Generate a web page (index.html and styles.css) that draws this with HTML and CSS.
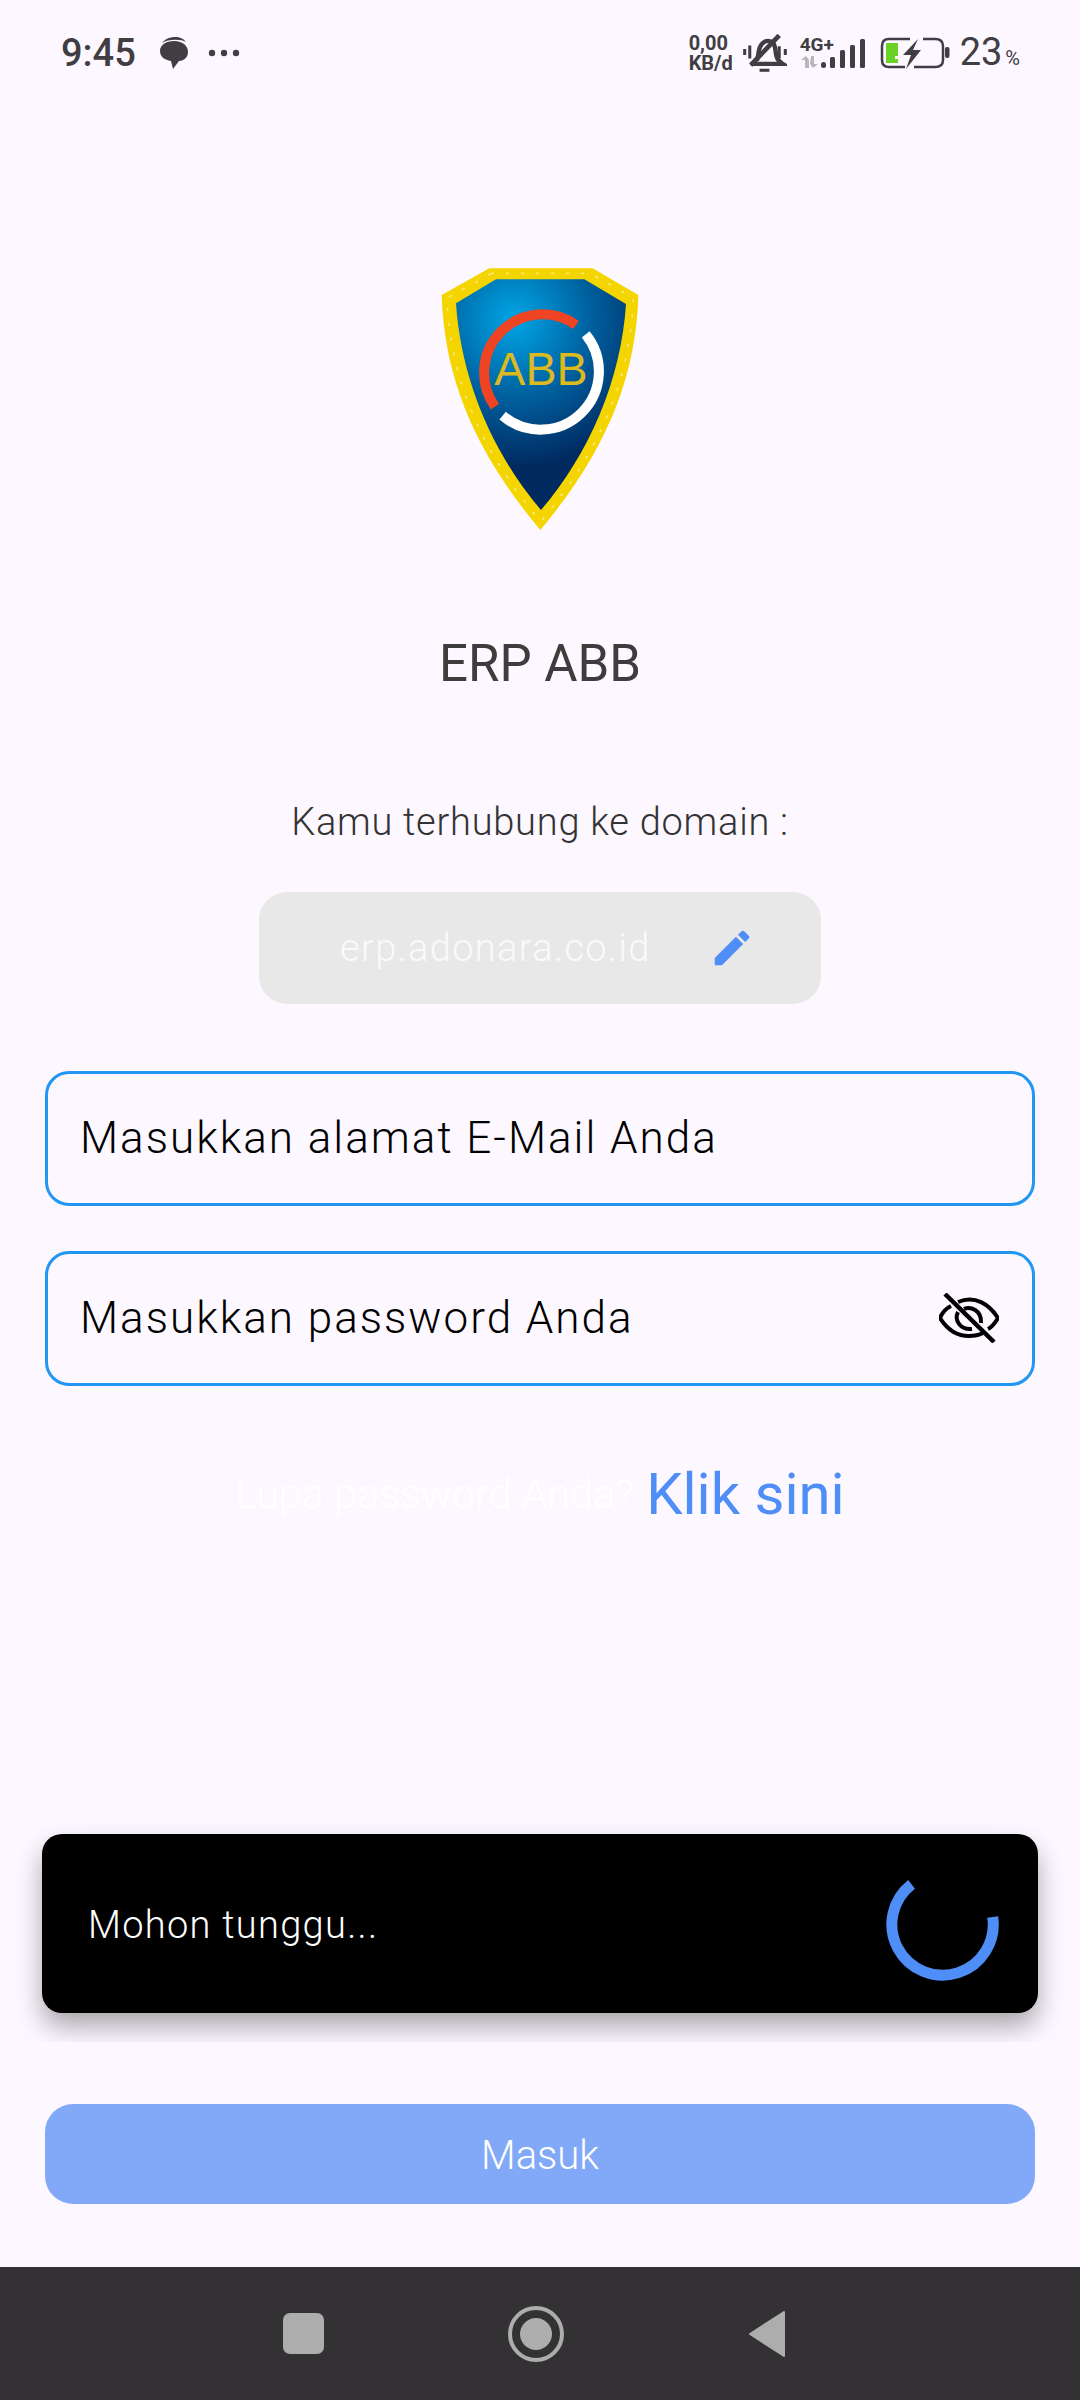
FILE: index.html
```html
<!DOCTYPE html>
<html lang="en">
<head>
    <meta charset="UTF-8">
    <meta name="viewport" content="width=device-width, initial-scale=1.0">
    <title>ERP ABB</title>
    <link rel="stylesheet" href="styles.css">
</head>

<body>
    <div class="page">
        <!-- status bar -->
        <div class="status">
            <div class="status-left">
                <span class="time">9:45</span>
                <svg class="bubble" width="30" height="32" viewBox="0 0 30 32">
                    <path d="M3 6 C6 2 11 0 16 0 C21 0 25 2 27 5 C22 2 9 2 3 6 Z" fill="#403d43"/>
                    <path d="M1 14 C1 8 7 4 15 4 C24 4 29 9 29 15 C29 21 24 24 20 24 L14 32 L12 24 C6 23 1 20 1 14 Z" fill="#403d43"/>
                </svg>
                <svg class="dots" width="32" height="8" viewBox="0 0 32 8">
                    <circle cx="4" cy="4" r="3.2" fill="#403d43"/>
                    <circle cx="16" cy="4" r="3.2" fill="#403d43"/>
                    <circle cx="28" cy="4" r="3.2" fill="#403d43"/>
                </svg>
            </div>
            <div class="status-right">
                <div class="speed"><span>0,00</span><span>KB/d</span></div>
                <svg class="bell" width="44" height="38" viewBox="255 40 130 112" fill="none" stroke="#403d43">
                    <path d="M296 118 C303 100 298 82 312 68 C322 58 336 58 344 66 C352 76 350 92 354 106 C357 116 362 122 372 128 H278" stroke-width="13"/>
                    <path d="M362 44 L278 132" stroke-width="14"/>
                    <path d="M304 147 H333" stroke-width="9"/>
                    <path d="M260 84 V102 M275 74 V112 M362 76 V112 M380 84 V102" stroke-width="9"/>
                </svg>
                <div class="network">
                    <span class="net-label">4G+</span>
                    <svg width="65" height="30" viewBox="0 0 65 30">
                        <path d="M5 30 V22 H1 L6 18 L9 22 V30 Z" fill="#b9b6bb"/>
                        <path d="M11 18 H14 V26 H18 L13 30 L10 26 Z" fill="#b9b6bb"/>
                        <rect x="21" y="24" width="5" height="6" rx="2.5" fill="#403d43"/>
                        <rect x="30" y="19" width="5" height="11" rx="1.5" fill="#403d43"/>
                        <rect x="40" y="12" width="5" height="18" rx="1.5" fill="#403d43"/>
                        <rect x="50" y="7" width="5" height="23" rx="1.5" fill="#403d43"/>
                        <rect x="60" y="1" width="5" height="29" rx="1.5" fill="#403d43"/>
                    </svg>
                </div>
                <svg class="battery" width="70" height="32" viewBox="0 0 70 32" fill="none">
                    <path d="M30 2 H9 Q2 2 2 9 V23 Q2 30 9 30 H25" stroke="#403d43" stroke-width="2.5"/>
                    <path d="M43 2 H55 Q63 2 63 9 V23 Q63 30 55 30 H34" stroke="#403d43" stroke-width="2.5"/>
                    <path d="M6 6 H18 V19 H15 V22 H18 V26 H6 Z" fill="#6ad125"/>
                    <path d="M38 2 L23 18 H31 L26 32 L41 13 H33 Z" fill="#403d43"/>
                    <rect x="65" y="10" width="4.5" height="11" rx="2" fill="#403d43"/>
                </svg>
                <div class="level"><span>23</span><span class="percent">%</span></div>
            </div>
        </div>

        <div class="content">
            <svg class="logo" width="198" height="264" viewBox="120 84 594 792">
                <defs>
                    <radialGradient id="shield" gradientUnits="userSpaceOnUse" cx="340" cy="240" r="520">
                        <stop offset="0" stop-color="#00a6e6"/>
                        <stop offset="0.45" stop-color="#005f9e"/>
                        <stop offset="0.85" stop-color="#002a60"/>
                    </radialGradient>
                </defs>
                <path d="M265 85 H575 L712 165 C705 420 610 640 418 870 C225 640 130 420 122 165 Z" fill="#f4d500"/>
                <path class="logo-stitch" d="M272 100 H568 L697 174 C688 420 595 635 419 845 C243 635 147 420 138 174 Z"/>
                <path d="M285 118 H550 L675 192 C660 420 565 640 420 810 C275 640 180 420 165 190 Z" fill="url(#shield)"/>
                <path d="M282 500 A175 175 0 0 1 525 255" fill="none" stroke="#ef4423" stroke-width="30"/>
                <path d="M554 283 A175 175 0 0 1 305 527" fill="none" stroke="#ffffff" stroke-width="30"/>
                <text class="logo-text" x="420" y="436" text-anchor="middle">ABB</text>
            </svg>

            <h1 class="title">ERP ABB</h1>
            <p class="domain-label">Kamu terhubung ke domain :</p>

            <div class="domain">
                <span class="domain-name">erp.adonara.co.id</span>
                <svg class="edit" width="46" height="46" viewBox="0 0 24 24">
                    <path d="M3 17.25V21h3.75L17.81 9.94l-3.75-3.75L3 17.25zM20.71 7.04c.39-.39.39-1.02 0-1.41l-2.34-2.34c-.39-.39-1.02-.39-1.41 0l-1.83 1.83 3.75 3.75 1.83-1.83z" fill="#4f8ef7"/>
                </svg>
            </div>

            <div class="field field-email"><span>Masukkan alamat E-Mail Anda</span></div>
            <div class="field field-password">
                <span>Masukkan password Anda</span>
                <svg class="eye" width="60" height="50" viewBox="0 0 60 50" fill="none" stroke="#000" stroke-width="4">
                    <path d="M12 13 C6 16 3 20 1 25 C8 36 18 43 30 43 C36 43 40 42 44 40"/>
                    <path d="M19 9 C36 2 50 11 59 25 C56 30 53 34 49 36"/>
                    <path d="M25 16 C31 13 43 17 42 30"/>
                    <path d="M19 19 C15 27 21 37 33 36"/>
                    <path d="M6 1 L55 49" stroke-width="4.5"/>
                </svg>
            </div>

            <div class="forgot">
                <span class="forgot-text">Lupa password Anda?</span>
                <span class="forgot-link">Klik sini</span>
            </div>

            <button class="submit">Masuk</button>
        </div>

        <!-- snackbar on top of the form -->
        <div class="snackbar">
            <span class="snackbar-text">Mohon tunggu...</span>
            <svg class="spinner" width="114" height="114" viewBox="0 0 114 114">
                <path d="M107.7 50 A50.7 50.7 0 1 1 26.6 17.3" fill="none" stroke="#4f8ef7" stroke-width="11"/>
            </svg>
        </div>

        <div class="navbar">
            <div class="nav-square"></div>
            <div class="nav-home"><div class="nav-dot"></div></div>
            <svg width="38" height="48" viewBox="0 0 38 48">
                <path d="M36 2 V46 L2 24 Z" fill="#adadad" stroke="#adadad" stroke-width="2" stroke-linejoin="round"/>
            </svg>
        </div>
    </div>
</body>
</html>
```

FILE: styles.css
```css
body {
    margin: 0;
    background-color: #fdf7ff;
    font-family: Roboto, "Liberation Sans", sans-serif;
}

.page {
    position: relative;
    display: flex;
    flex-direction: column;
    height: 2400px;
    overflow: hidden;
}

/* status bar */
.status {
    display: flex;
    justify-content: space-between;
    align-items: center;
    height: 106px;
    padding: 0 60px 0 61px;
    color: #403d43;
}

.status-left,
.status-right {
    display: flex;
    align-items: center;
}

.time {
    font-size: 38px;
    font-weight: 500;
    line-height: 44px;
}

.bubble {
    margin-left: 23px;
}

.dots {
    margin-left: 19px;
}

.speed {
    display: flex;
    flex-direction: column;
    align-items: flex-start;
    width: 43px;
    font-size: 20px;
    font-weight: 700;
    line-height: 20px;
}

.bell {
    margin-left: 11px;
}

.network {
    position: relative;
    margin-left: 13px;
    width: 65px;
    height: 30px;
}

.network svg {
    display: block;
}

.net-label {
    position: absolute;
    left: 0;
    top: -4px;
    font-size: 19px;
    font-weight: 700;
    line-height: 22px;
}

.battery {
    margin-left: 15px;
}

.level {
    margin-left: 10px;
    margin-top: 3px;
    font-size: 38px;
    line-height: 44px;
    white-space: nowrap;
}

.percent {
    margin-left: 3px;
    font-size: 20px;
}

/* form */
.content {
    flex: 1;
    display: flex;
    flex-direction: column;
    align-items: center;
    padding: 162px 45px 63px;
}

.logo {
    display: block;
    flex: none;
}

.logo-stitch {
    fill: none;
    stroke: #f8ea80;
    stroke-width: 5;
    stroke-dasharray: 5 40;
    stroke-linecap: round;
}

.logo-text {
    font-family: "Liberation Sans", sans-serif;
    font-size: 140px;
    fill: #dcb91f;
}

.title {
    margin: 102px 0 0;
    font-size: 51px;
    font-weight: 400;
    line-height: 60px;
    color: #3d3d3d;
}

.domain-label {
    margin: 103px 0 0;
    font-size: 38px;
    font-weight: 300;
    letter-spacing: 0.75px;
    line-height: 50px;
    color: #333;
}

.domain {
    display: flex;
    align-items: center;
    box-sizing: border-box;
    width: 562px;
    height: 112px;
    margin-top: 45px;
    padding-left: 81px;
    background-color: #e8e8e8;
    border-radius: 28px;
}

.domain-name {
    font-size: 38px;
    font-weight: 300;
    letter-spacing: 1.35px;
    color: #fafafa;
}

.edit {
    margin-left: 58px;
}

.field {
    display: flex;
    justify-content: space-between;
    align-items: center;
    box-sizing: border-box;
    width: 990px;
    height: 135px;
    padding: 0 33px 2px 32px;
    border: 3px solid #2196f3;
    border-radius: 24px;
    font-size: 44px;
    font-weight: 300;
    letter-spacing: 2px;
    color: #000;
}

.field-email {
    margin-top: 67px;
}

.field-password {
    margin-top: 45px;
}

.forgot {
    display: flex;
    align-items: center;
    gap: 12px;
    margin-top: 70px;
    line-height: 76px;
}

.forgot-text {
    font-size: 41.3px;
    font-weight: 300;
    color: #fff;
}

.forgot-link {
    font-size: 58px;
    color: #4f8ef7;
}

.submit {
    width: 990px;
    height: 100px;
    margin-top: auto;
    padding-top: 4px;
    border: none;
    border-radius: 28px;
    background-color: #82a9f8;
    font-family: inherit;
    font-size: 40px;
    font-weight: 300;
    color: #fff;
}

/* snackbar */
.snackbar {
    position: absolute;
    left: 42px;
    right: 42px;
    top: 1834px;
    display: flex;
    justify-content: space-between;
    align-items: center;
    box-sizing: border-box;
    height: 179px;
    padding: 0 39px 0 46px;
    background-color: #000;
    border-radius: 20px;
    box-shadow: 0 14px 26px rgba(0, 0, 0, 0.32);
    clip-path: inset(-40px -40px -29px -40px);
    font-size: 38px;
    font-weight: 300;
    letter-spacing: 1.3px;
    color: #fff;
}

.snackbar-text {
    margin-top: 2px;
}

/* navigation bar */
.navbar {
    display: flex;
    align-items: center;
    height: 133px;
    padding-left: 283px;
    background-color: #343135;
}

.nav-square {
    width: 41px;
    height: 41px;
    border-radius: 7px;
    background-color: #adadad;
}

.nav-home {
    display: flex;
    justify-content: center;
    align-items: center;
    box-sizing: border-box;
    width: 56px;
    height: 56px;
    margin-left: 184px;
    border: 4px solid #adadad;
    border-radius: 50%;
}

.nav-dot {
    width: 32px;
    height: 32px;
    border-radius: 50%;
    background-color: #adadad;
}

.navbar svg {
    margin-left: 184px;
}
```
